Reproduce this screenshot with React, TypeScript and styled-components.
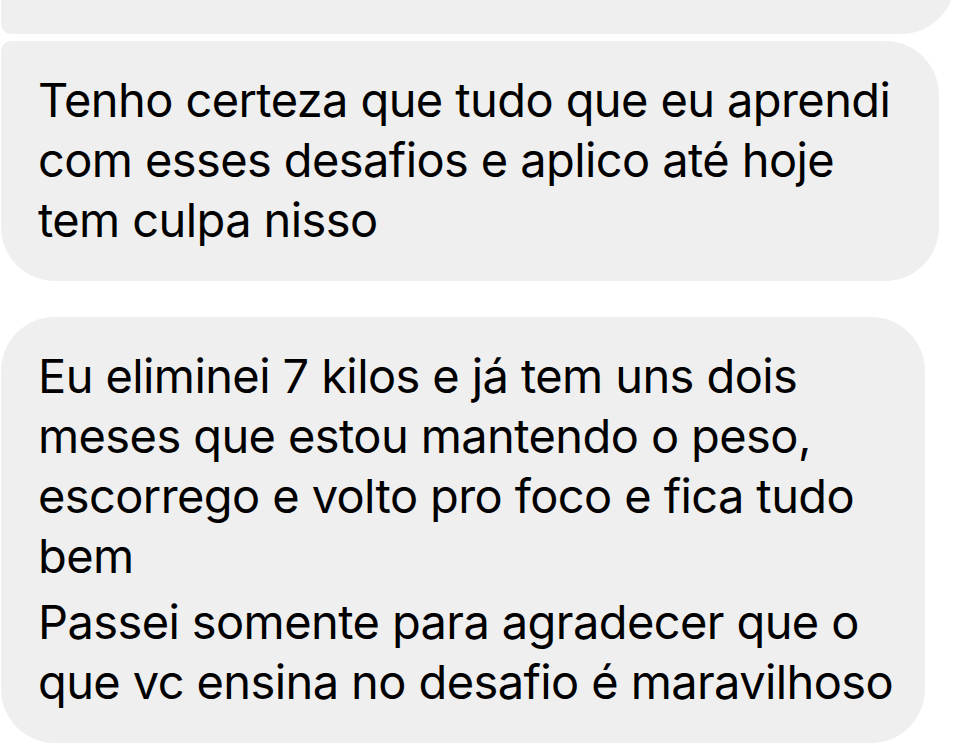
import React from "react";
import styled, { createGlobalStyle } from "styled-components";

const Global = createGlobalStyle`
  html, body { margin: 0; padding: 0; background: #ffffff; }
  body { font-family: Inter, "Liberation Sans", Arial, sans-serif; }
`;

const Thread = styled.div`
  width: 958px;
  height: 750px;
  overflow: hidden;
  display: flex;
  flex-direction: column;
  align-items: flex-start;
  padding-left: 1px;
  box-sizing: border-box;
`;

const Bubble = styled.div<{ $width: number; $tl: number; $tr: number; $br: number; $bl: number; $gap: number }>`
  width: ${(p) => p.$width}px;
  box-sizing: border-box;
  background: #efefef;
  color: #000;
  margin-top: ${(p) => p.$gap}px;
  padding: 29px 20px 31px 37px;
  border-radius: ${(p) => `${p.$tl}px ${p.$tr}px ${p.$br}px ${p.$bl}px`};
  font-size: 47px;
  line-height: 60px;
  letter-spacing: -0.6px;
`;

const Line = styled.span`
  display: block;
  white-space: nowrap;
`;

const Paragraph = styled.div<{ $spaced?: boolean }>`
  margin-top: ${(p) => (p.$spaced ? 6 : 0)}px;
`;

const CutBubble = styled.div`
  width: 954px;
  height: 120px;
  margin-top: -86px;
  flex-shrink: 0;
  background: #efefef;
  border-radius: 0 0 54px 10px;
`;

export default function App() {
  return (
    <>
      <Global />
      <Thread>
        <CutBubble />
        <Bubble $width={938} $tl={10} $tr={54} $br={54} $bl={54} $gap={7}>
          <Line>Tenho certeza que tudo que eu aprendi</Line>
          <Line>com esses desafios e aplico até hoje</Line>
          <Line>tem culpa nisso</Line>
        </Bubble>
        <Bubble $width={924} $tl={54} $tr={54} $br={54} $bl={54} $gap={36}>
          <Paragraph>
            <Line>Eu eliminei 7 kilos e já tem uns dois</Line>
            <Line>meses que estou mantendo o peso,</Line>
            <Line>escorrego e volto pro foco e fica tudo</Line>
            <Line>bem</Line>
          </Paragraph>
          <Paragraph $spaced>
            <Line>Passei somente para agradecer que o</Line>
            <Line>que vc ensina no desafio é maravilhoso</Line>
          </Paragraph>
        </Bubble>
      </Thread>
    </>
  );
}
